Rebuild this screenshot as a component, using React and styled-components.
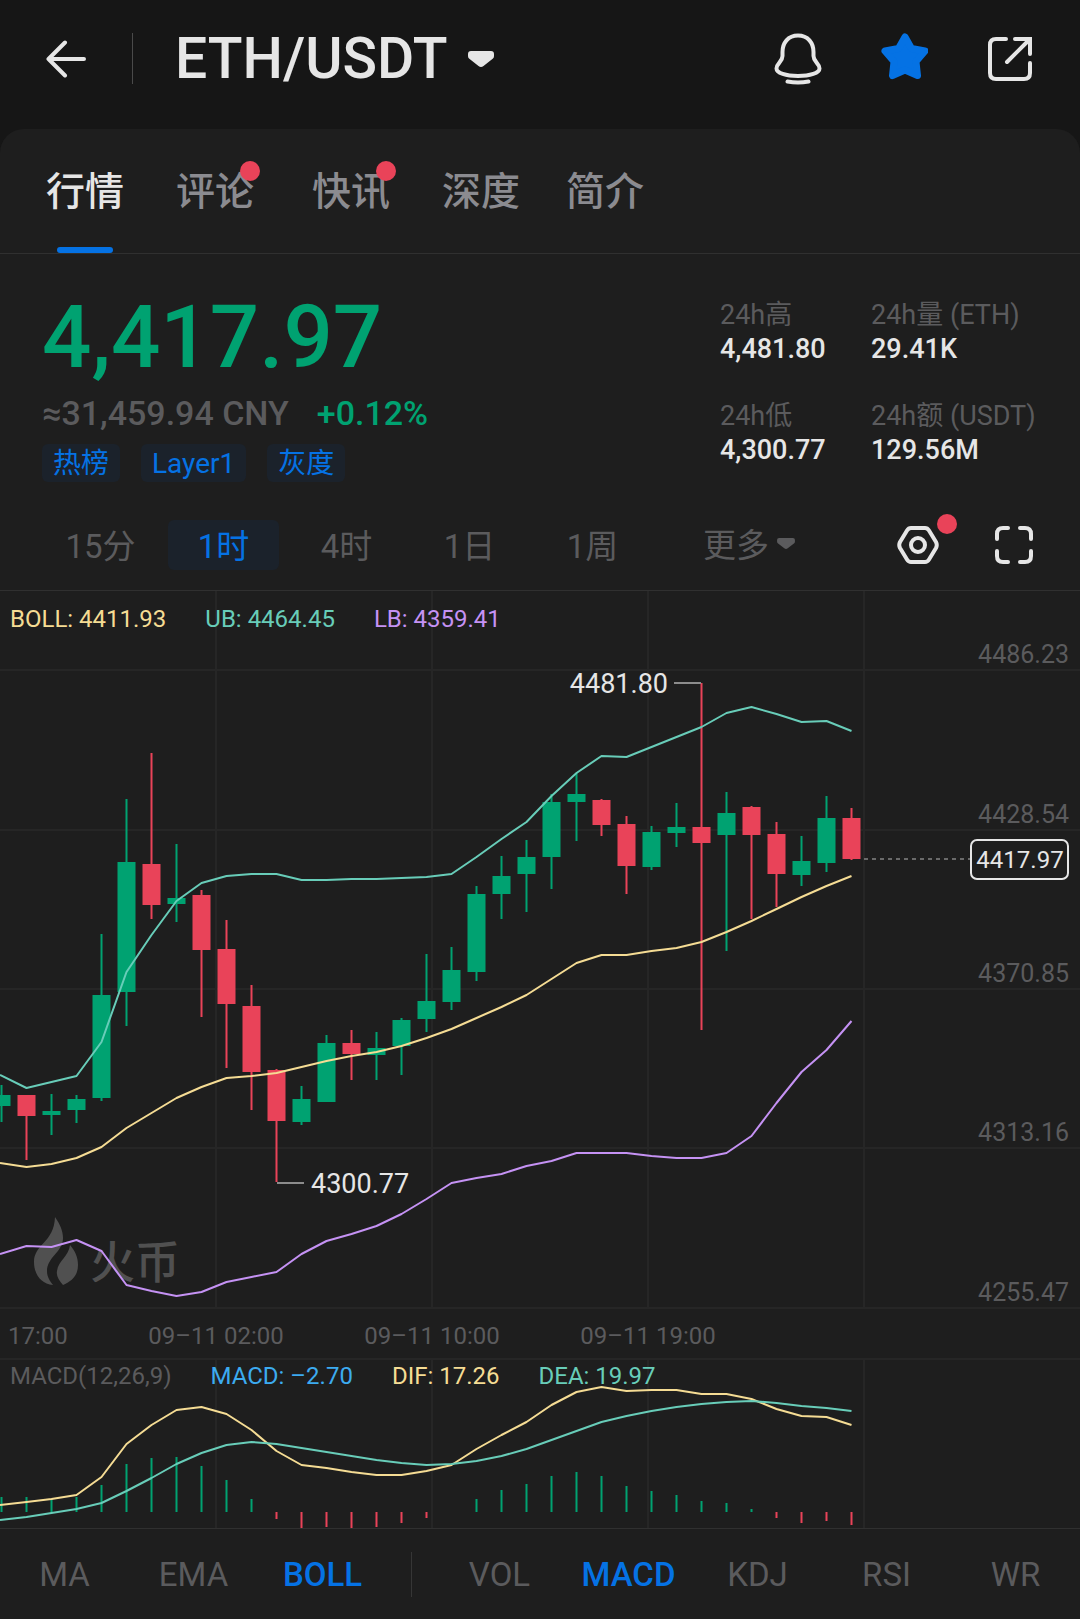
import React, { useState } from 'react'
import styled, { createGlobalStyle } from 'styled-components'


const GlobalStyle = createGlobalStyle`
    *, *::before, *::after {
        box-sizing: border-box;
    }

    body {
        margin: 0;
        background: #1e1e1e;
        color: #e6e6e6;
        font-family: Roboto, "Noto Sans CJK SC", sans-serif;
    }

    button {
        padding: 0;
        border: 0;
        background: none;
        color: inherit;
        font: inherit;
        cursor: pointer;
    }

    svg {
        display: block;
    }
`

const colors = {
    up: '#00a271',
    down: '#e94359',
    blue: '#0572e4',
    muted: '#5b5b5d',
    yellow: '#f5dc94',
    teal: '#68cdb9',
    purple: '#c592f4',
    grid: '#262626',
    line: '#303030',
}

/* ---------- header ---------- */

const Page = styled.div`
    background: #161616;
`

const Header = styled.header`
    display: flex;
    align-items: center;
    height: 129px;
    padding: 0 46px 12px 44px;
`

const IconButton = styled.button`
    display: flex;
    align-items: center;
    justify-content: center;
    width: 48px;
    height: 52px;
`

const BackButton = styled(IconButton)`
    padding-right: 4px;
`

const Divider = styled.span`
    width: 1px;
    height: 51px;
    margin: 0 42px 0 40px;
    background: #4a4a4a;
`

const PairButton = styled.button`
    display: flex;
    align-items: center;
    gap: 20px;
    font-size: 57px;
    font-weight: 500;
    line-height: 64px;
`

const HeaderActions = styled.div`
    display: flex;
    gap: 58px;
    margin-left: auto;
`

/* ---------- tabs ---------- */

const Panel = styled.main`
    background: #1e1e1e;
    border-radius: 24px 24px 0 0;
`

const Tabs = styled.nav`
    display: flex;
    gap: 46px;
    padding: 0 46px;
    border-bottom: 1px solid ${colors.line};
`

const Tab = styled.button`
    position: relative;
    height: 124px;
    margin: 0 ${({ $badge }) => ($badge ? 6 : 0)}px;
    padding-bottom: 6px;
    font-size: 39px;
    font-weight: 500;
    color: ${({ $active }) => ($active ? '#e6e6e6' : '#8b8b90')};

    &::after {
        content: '';
        display: ${({ $active }) => ($active ? 'block' : 'none')};
        position: absolute;
        left: 50%;
        bottom: 0;
        width: 56px;
        height: 6px;
        margin-left: -28px;
        border-radius: 3px;
        background: ${colors.blue};
    }
`

const Dot = styled.span`
    position: absolute;
    top: ${({ $top }) => $top}px;
    right: ${({ $right }) => $right}px;
    width: 20px;
    height: 20px;
    border-radius: 50%;
    background: ${colors.down};
`

/* ---------- quote ---------- */

const Quote = styled.section`
    display: flex;
    justify-content: space-between;
    padding: 38px 42px;
`

const Price = styled.div`
    color: ${colors.up};
    font-size: 87px;
    font-weight: 500;
    line-height: 90px;
`

const SubPrice = styled.div`
    display: flex;
    gap: 28px;
    margin: 11px 0;
    color: ${colors.muted};
    font-size: 34px;
    font-weight: 500;
    line-height: 40px;
`

const Change = styled.span`
    color: ${colors.up};
`

const Tags = styled.div`
    display: flex;
    gap: 21px;
`

const Tag = styled.a`
    height: 38px;
    padding: 0 11px;
    border-radius: 6px;
    background: #1b222b;
    color: ${colors.blue};
    font-size: 28px;
    line-height: 40px;
    text-decoration: none;
`

const Stats = styled.dl`
    display: grid;
    grid-template-columns: 151px 167px;
    row-gap: 33px;
    align-content: start;
    margin: 6px 0 0;
    font-size: 27px;
    line-height: 34px;
    white-space: nowrap;

    dt {
        color: ${colors.muted};
    }

    dd {
        margin: 0;
        font-weight: 500;
    }
`

/* ---------- intervals ---------- */

const IntervalBar = styled.div`
    display: flex;
    gap: 26px;
    padding: 0 18px 20px 39px;
    border-bottom: 1px solid ${colors.line};
`

const Intervals = styled.div`
    display: grid;
    flex: 1;
    grid-template-columns: repeat(5, 123fr) 190fr;
`

const Interval = styled.button`
    height: 50px;
    margin: 0 6px;
    padding-bottom: 4px;
    border-radius: 6px;
    background: ${({ $active }) => ($active ? '#1b222b' : 'transparent')};
    color: ${({ $active }) => ($active ? colors.blue : colors.muted)};
    font-size: 33px;
`

const MoreButton = styled(Interval)`
    display: flex;
    align-items: center;
    justify-content: center;
    gap: 8px;
`

const Tools = styled.div`
    display: flex;
`

const ToolButton = styled(IconButton)`
    position: relative;
    width: 96px;
    height: 50px;
`

/* ---------- chart ---------- */

const ChartPanel = styled.section`
    position: relative;
`

const Legend = styled.div`
    position: absolute;
    top: ${({ $top }) => $top}px;
    left: 10px;
    display: flex;
    gap: 39px;
    font-size: 24px;
    line-height: 30px;
`

const LegendItem = styled.span`
    color: ${({ $color }) => $color};
`

const ChartSvg = styled.svg`
    width: 100%;
    height: auto;

    text {
        font-size: 24px;
        fill: ${colors.muted};
    }

    .price {
        font-size: 25px;
    }

    .mark {
        font-size: 27px;
        fill: #e6e6e6;
    }

    .current {
        fill: #e6e6e6;
    }

    .watermark {
        font-size: 45px;
        font-weight: 500;
        fill: #505050;
    }
`

/* ---------- footer ---------- */

const IndicatorBar = styled.footer`
    display: grid;
    grid-template-columns: repeat(3, 1fr) 48px repeat(5, 1fr);
    align-items: center;
    justify-items: center;
    height: 91px;
    border-top: 1px solid ${colors.line};
    background: #1e1e1e;
`

const Indicator = styled.button`
    width: 100%;
    height: 100%;
    color: ${({ $active }) => ($active ? colors.blue : colors.muted)};
    font-size: 33px;
    font-weight: ${({ $active }) => ($active ? 500 : 400)};
`

const IndicatorDivider = styled.span`
    width: 1px;
    height: 45px;
    background: #363636;
`

/* ---------- data ---------- */

// [up, open/close top, open/close bottom, high, low]
const candles = [
    [1, 1095, 1106, 1085, 1122],
    [0, 1095, 1116, 1095, 1160],
    [1, 1111, 1115, 1094, 1135],
    [1, 1099, 1110, 1095, 1123],
    [1, 995, 1098, 934, 1101],
    [1, 862, 992, 799, 1026],
    [0, 864, 905, 753, 919],
    [1, 898, 904, 844, 922],
    [0, 895, 950, 890, 1017],
    [0, 949, 1004, 920, 1068],
    [0, 1006, 1072, 985, 1110],
    [0, 1070, 1121, 1069, 1182],
    [1, 1099, 1122, 1086, 1125],
    [1, 1043, 1102, 1035, 1102],
    [0, 1043, 1054, 1030, 1080],
    [1, 1048, 1055, 1032, 1080],
    [1, 1020, 1046, 1018, 1075],
    [1, 1001, 1019, 954, 1032],
    [1, 970, 1002, 947, 1010],
    [1, 894, 972, 886, 981],
    [1, 876, 894, 856, 919],
    [1, 857, 874, 840, 912],
    [1, 802, 857, 794, 889],
    [1, 794, 802, 773, 841],
    [0, 800, 825, 799, 836],
    [0, 824, 866, 816, 894],
    [1, 832, 867, 826, 870],
    [1, 827, 833, 803, 847],
    [0, 827, 843, 683, 1030],
    [1, 813, 835, 792, 951],
    [0, 807, 835, 806, 919],
    [0, 834, 874, 822, 907],
    [1, 861, 875, 836, 886],
    [1, 818, 863, 796, 872],
    [0, 818, 859, 808, 860],
]

const boll = [1163, 1167, 1164, 1158, 1147, 1128, 1113, 1098, 1087, 1078, 1076, 1073, 1067, 1061, 1056, 1052, 1046, 1038, 1029, 1018, 1007, 995, 979, 963, 955, 955, 951, 948, 942, 932, 921, 909, 897, 886, 876]
const upper = [1075, 1088, 1082, 1076, 1042, 972, 935, 901, 883, 876, 874, 874, 880, 880, 879, 879, 878, 877, 874, 857, 839, 822, 796, 773, 756, 757, 747, 737, 727, 713, 707, 714, 722, 721, 731]
const lower = [1254, 1246, 1247, 1240, 1251, 1285, 1291, 1296, 1292, 1282, 1277, 1272, 1254, 1241, 1234, 1226, 1214, 1199, 1183, 1178, 1174, 1166, 1161, 1153, 1153, 1153, 1156, 1158, 1158, 1153, 1136, 1103, 1072, 1050, 1021]

const histogram = [1497, 1497, 1499, 1497, 1485, 1464, 1458, 1457, 1466, 1480, 1499, 1519, 1528, 1527, 1528, 1527, 1523, 1518, 1512, 1499, 1490, 1484, 1476, 1472, 1476, 1486, 1491, 1495, 1501, 1503, 1509, 1518, 1523, 1521, 1525]
const dif = [1505, 1502, 1499, 1495, 1477, 1444, 1425, 1410, 1407, 1414, 1430, 1451, 1465, 1468, 1472, 1475, 1475, 1471, 1465, 1449, 1435, 1422, 1405, 1392, 1387, 1391, 1390, 1390, 1394, 1394, 1399, 1409, 1416, 1417, 1425]
const dea = [1520, 1517, 1513, 1509, 1503, 1491, 1478, 1464, 1453, 1445, 1442, 1444, 1448, 1452, 1456, 1460, 1463, 1465, 1464, 1461, 1456, 1449, 1440, 1431, 1422, 1416, 1411, 1407, 1404, 1402, 1401, 1403, 1406, 1408, 1411]

const columns = [216, 432, 648, 864]
const zero = 1512

const scale = [
    { y: 670, label: '4486.23' },
    { y: 830, label: '4428.54' },
    { y: 989, label: '4370.85' },
    { y: 1148, label: '4313.16' },
    { y: 1308, label: '4255.47' },
]

const candleX = i => 1.5 + i * 25

const Curve = ({ values, color }) => (
    <polyline
        points={values.map((y, i) => `${i ? candleX(i) : 0},${y}`).join(' ')}
        fill="none"
        stroke={color}
        strokeWidth="2"
        strokeLinejoin="round"
    />
)

/* ---------- icons ---------- */

const BackIcon = () => (
    <svg width="42" height="38" viewBox="0 0 42 38" fill="none" stroke="#e6e6e6" strokeWidth="4" strokeLinecap="round" strokeLinejoin="round">
        <path d="M20 2.500 3.500 19 20 35.500M3.500 19H39" />
    </svg>
)

const Caret = ({ width, height }) => (
    <svg width={width} height={height} viewBox="0 0 26 16" fill="currentColor">
        <path d="M3 0H23Q26 0 26 3V5Q26 6.500 25 7.500L15.500 15Q13 17 10.500 15L1 7.500Q0 6.500 0 5V3Q0 0 3 0Z" />
    </svg>
)

const BellIcon = () => (
    <svg width="48" height="52" viewBox="0 0 48 52" fill="none" stroke="#e6e6e6" strokeWidth="4" strokeLinecap="round" strokeLinejoin="round">
        <path d="M24 2.500C14 2.500 8.500 10 8.500 19V23C8.500 29 2.500 30 2.500 35.500C2.500 40 12 43 24 43C36 43 45.500 40 45.500 35.500C45.500 30 39.500 29 39.500 23V19C39.500 10 34 2.500 24 2.500Z" />
        <path d="M13.500 48.500Q24 50.500 34.500 48.500" />
    </svg>
)

const StarIcon = () => (
    <svg width="48" height="52" viewBox="-1 1 48 52" fill={colors.blue} stroke={colors.blue} strokeWidth="7" strokeLinejoin="round">
        <path d="M24 5 30.500 16.500 44 19 35 29.500 36.500 43.500 24 38 11.500 43.500 13 29.500 4 19 17.500 16.500Z" />
    </svg>
)

const ShareIcon = () => (
    <svg width="46" height="46" viewBox="0 0 46 46" fill="none" stroke="#e6e6e6" strokeWidth="4" strokeLinecap="round">
        <path d="M19 3H9Q3 3 3 9V37Q3 43 9 43H37Q43 43 43 37V27" />
        <path d="M28 3H43V18M42 4 20 26" />
    </svg>
)

const SettingsIcon = () => (
    <svg width="42" height="40" viewBox="0 0 42 40" fill="none" stroke="#e6e6e6" strokeWidth="4" strokeLinejoin="round">
        <path d="M14 3H28Q30.500 3 32 5.500L39 17Q40.500 20 39 23L32 34.500Q30.500 37 28 37H14Q11.500 37 10 34.500L3 23Q1.500 20 3 17L10 5.500Q11.500 3 14 3Z" />
        <circle cx="21" cy="20" r="7" />
    </svg>
)

const FullscreenIcon = () => (
    <svg width="40" height="40" viewBox="0 0 40 40" fill="none" stroke="#e6e6e6" strokeWidth="4" strokeLinecap="round">
        <path d="M3 14V9Q3 3 9 3H14M26 3H31Q37 3 37 9V14M37 26V31Q37 37 31 37H26M14 37H9Q3 37 3 31V26" />
    </svg>
)

/* ---------- charts ---------- */

const PriceChart = () => (
    <ChartPanel>
        <ChartSvg viewBox="0 591 1080 767" role="img" aria-label="ETH/USDT K线">
            <g stroke={colors.grid} strokeWidth="2">
                {columns.map(x => <line key={x} x1={x} x2={x} y1="591" y2="1308" />)}
                {scale.map(({ y }) => <line key={y} x1="0" x2="1080" y1={y} y2={y} />)}
            </g>
            <g fill="#505050">
                <path d="M55 1217C60 1224 63 1231 63 1238C63 1252 47 1257 47 1271C47 1277 50 1281 53 1285C41 1284 34 1274 34 1262C34 1244 54 1243 55 1217Z" />
                <path d="M70 1245C75 1251 78 1257 78 1265C78 1277 70 1282 63 1285C59 1280 56 1276 57 1271C58 1261 69 1256 70 1245Z" />
            </g>
            <text className="watermark" x="90" y="1279">火币</text>
            {candles.map(([up, top, bottom, high, low], i) => (
                <g key={i} fill={up ? colors.up : colors.down}>
                    <rect x={candleX(i) - 1} y={high} width="2" height={low - high} />
                    <rect x={candleX(i) - 9} y={top} width="18" height={bottom - top} />
                </g>
            ))}
            <Curve values={boll} color={colors.yellow} />
            <Curve values={upper} color={colors.teal} />
            <Curve values={lower} color={colors.purple} />
            <g stroke="#8c8c8c" strokeWidth="2">
                <line x1="674" x2="701" y1="683" y2="683" />
                <line x1="277" x2="304" y1="1183" y2="1183" />
            </g>
            <text className="mark" x="668" y="693" textAnchor="end">4481.80</text>
            <text className="mark" x="311" y="1193">4300.77</text>
            {scale.map(({ y, label }) => (
                <text key={label} className="price" x="1069" y={y - 7} textAnchor="end">{label}</text>
            ))}
            <line x1="864" x2="970" y1="859" y2="859" stroke="#6a6a6a" strokeWidth="2" strokeDasharray="4 4" />
            <rect x="971" y="840" width="97" height="39" rx="6" fill="#1e1e1e" stroke="#e6e6e6" strokeWidth="2" />
            <text className="current" x="1020" y="868" textAnchor="middle">4417.97</text>
            <text x="8" y="1344">17:00</text>
            <text x="216" y="1344" textAnchor="middle">09–11 02:00</text>
            <text x="432" y="1344" textAnchor="middle">09–11 10:00</text>
            <text x="648" y="1344" textAnchor="middle">09–11 19:00</text>
        </ChartSvg>
        <Legend $top={13}>
            <LegendItem $color={colors.yellow}>BOLL: 4411.93</LegendItem>
            <LegendItem $color={colors.teal}>UB: 4464.45</LegendItem>
            <LegendItem $color={colors.purple}>LB: 4359.41</LegendItem>
        </Legend>
    </ChartPanel>
)

const MacdChart = () => (
    <ChartPanel>
        <ChartSvg viewBox="0 1358 1080 170" role="img" aria-label="MACD">
            <g stroke={colors.grid} strokeWidth="2">
                <line x1="0" x2="1080" y1="1359" y2="1359" />
                {columns.map(x => <line key={x} x1={x} x2={x} y1="1359" y2="1528" />)}
            </g>
            {histogram.map((y, i) => (
                <rect
                    key={i}
                    x={candleX(i) - 1}
                    y={Math.min(y, zero)}
                    width="2"
                    height={Math.abs(y - zero)}
                    fill={y < zero ? colors.up : colors.down}
                />
            ))}
            <Curve values={dif} color={colors.yellow} />
            <Curve values={dea} color={colors.teal} />
        </ChartSvg>
        <Legend $top={3}>
            <LegendItem $color={colors.muted}>MACD(12,26,9)</LegendItem>
            <LegendItem $color="#3cabf0">MACD: –2.70</LegendItem>
            <LegendItem $color={colors.yellow}>DIF: 17.26</LegendItem>
            <LegendItem $color={colors.teal}>DEA: 19.97</LegendItem>
        </Legend>
    </ChartPanel>
)

const tabs = [
    { name: '行情' },
    { name: '评论', badge: true },
    { name: '快讯', badge: true },
    { name: '深度' },
    { name: '简介' },
]

const stats = [
    ['24h高', '4,481.80'],
    ['24h量 (ETH)', '29.41K'],
    ['24h低', '4,300.77'],
    ['24h额 (USDT)', '129.56M'],
]

const intervals = ['15分', '1时', '4时', '1日', '1周']
const mainIndicators = ['MA', 'EMA', 'BOLL']
const subIndicators = ['VOL', 'MACD', 'KDJ', 'RSI', 'WR']

const App = () => {
    const [tab, setTab] = useState('行情')
    const [interval, setActiveInterval] = useState('1时')
    const [main, setMain] = useState('BOLL')
    const [sub, setSub] = useState('MACD')

    return (
        <Page>
            <GlobalStyle />
            <Header>
                <BackButton aria-label="返回"><BackIcon /></BackButton>
                <Divider />
                <PairButton aria-haspopup="listbox">ETH/USDT <Caret width={26} height={16} /></PairButton>
                <HeaderActions>
                    <IconButton aria-label="提醒"><BellIcon /></IconButton>
                    <IconButton aria-label="收藏"><StarIcon /></IconButton>
                    <IconButton aria-label="分享"><ShareIcon /></IconButton>
                </HeaderActions>
            </Header>
            <Panel>
                <Tabs>
                    {tabs.map(({ name, badge }) => (
                        <Tab key={name} $active={name === tab} $badge={badge} onClick={() => setTab(name)}>
                            {name}
                            {badge && <Dot $top={32} $right={-6} />}
                        </Tab>
                    ))}
                </Tabs>
                <Quote>
                    <div>
                        <Price>4,417.97</Price>
                        <SubPrice>
                            <span>≈31,459.94 CNY</span>
                            <Change>+0.12%</Change>
                        </SubPrice>
                        <Tags>
                            <Tag href="#hot">热榜</Tag>
                            <Tag href="#layer1">Layer1</Tag>
                            <Tag href="#grayscale">灰度</Tag>
                        </Tags>
                    </div>
                    <Stats>
                        {stats.map(([label, value]) => (
                            <div key={label}>
                                <dt>{label}</dt>
                                <dd>{value}</dd>
                            </div>
                        ))}
                    </Stats>
                </Quote>
                <IntervalBar>
                    <Intervals>
                        {intervals.map(name => (
                            <Interval key={name} $active={name === interval} onClick={() => setActiveInterval(name)}>{name}</Interval>
                        ))}
                        <MoreButton aria-haspopup="menu">更多 <Caret width={18} height={11} /></MoreButton>
                    </Intervals>
                    <Tools>
                        <ToolButton aria-label="设置"><SettingsIcon /><Dot $top={-6} $right={9} /></ToolButton>
                        <ToolButton aria-label="全屏"><FullscreenIcon /></ToolButton>
                    </Tools>
                </IntervalBar>
                <PriceChart />
                <MacdChart />
            </Panel>
            <IndicatorBar>
                {mainIndicators.map(name => (
                    <Indicator key={name} $active={name === main} onClick={() => setMain(name)}>{name}</Indicator>
                ))}
                <IndicatorDivider />
                {subIndicators.map(name => (
                    <Indicator key={name} $active={name === sub} onClick={() => setSub(name)}>{name}</Indicator>
                ))}
            </IndicatorBar>
        </Page>
    )
}

export default App
